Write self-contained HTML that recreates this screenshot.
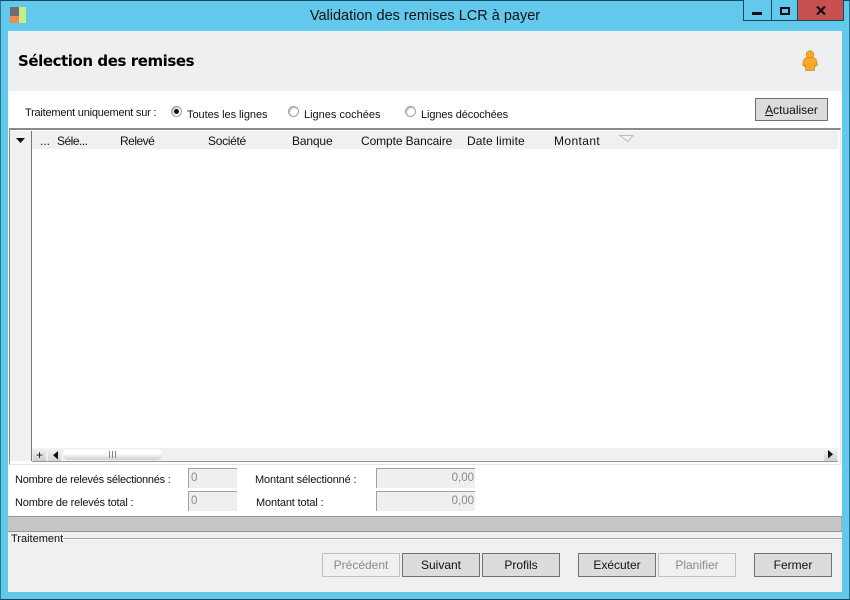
<!DOCTYPE html>
<html lang="fr"><head><meta charset="utf-8"><title>Validation des remises LCR à payer</title>
<style>
html,body{margin:0;padding:0;width:850px;height:600px;overflow:hidden;background:#63c9ec}
body{position:relative;font-family:"Liberation Sans",sans-serif;font-size:11px;color:#111}
div,span{position:absolute;box-sizing:border-box}
.t{white-space:nowrap;line-height:14px}
.h{font-size:12px;top:134px}
.btn{background:#dcdcdc;border:1px solid #707070;text-align:center;font-size:12px;line-height:23px;height:24px;width:78px;top:553px;color:#111}
.btn.d{background:#f0f0f0;border-color:#bfbfbf;color:#8a8a8a}
.inp{background:#efefef;border-top:1px solid #a0a0a0;border-left:1px solid #a0a0a0;height:20px;color:#8a8a8a;font-size:11.5px;line-height:19px}
.ctl{top:0;height:21px;border:1px solid #174a60;border-top:none}
.rad{width:11px;height:11px;border-radius:50%;border:1px solid #a0a0a0;background:#fff;box-shadow:inset 1px 1px 1px #bbb}
</style></head><body>
<div style="left:0;top:0;width:850px;height:600px;border:1px solid #174a60;border-left-color:#2a7391;border-right-color:#2a7391"></div>

<!-- title bar -->
<div style="left:10px;top:7px;width:9px;height:9px;background:#6e6e6e"></div>
<div style="left:10px;top:16px;width:9px;height:7px;background:#f08a50"></div>
<div style="left:19px;top:7px;width:7px;height:16px;background:#c4ee88"></div>
<div class="t" style="left:0;top:7px;width:850px;text-align:center;font-size:14.5px;line-height:18px;color:#111">Validation des remises LCR à payer</div>
<div class="ctl" style="left:743px;width:29px;background:#63c9ec"></div>
<div class="ctl" style="left:771px;width:27px;background:#63c9ec"></div>
<div class="ctl" style="left:797px;width:47px;background:#c75050"></div>
<div style="left:752px;top:12px;width:10px;height:3px;background:#111"></div>
<div style="left:780px;top:7px;width:10px;height:8px;border:2px solid #111"></div>
<svg style="position:absolute;left:816px;top:6px" width="10" height="9" viewBox="0 0 10 9"><path d="M1 0.5L9 8.5M9 0.5L1 8.5" stroke="#111" stroke-width="2.2" fill="none"/></svg>

<!-- client -->
<div style="left:8px;top:31px;width:834px;height:561px;background:#fff"></div>
<div style="left:8px;top:31px;width:834px;height:60px;background:#eeeff0"></div>
<div class="t" style="left:18px;top:52px;font-size:15px;line-height:18px;font-weight:bold;font-family:'DejaVu Sans',sans-serif;letter-spacing:-.43px;color:#000">Sélection des remises</div>
<svg style="position:absolute;left:800px;top:50px" width="20" height="22" viewBox="0 0 20 22"><circle cx="10" cy="4.500" r="3.800" fill="#f9a825" stroke="#c98a2e" stroke-width=".7"/><path d="M6.500 7.500h7l2.500 1.500 1.500 6-2 1.500-1-1.500v5.500h-9v-5.500l-1 1.500-2-1.500 1.500-6z" fill="#f9a825" stroke="#c98a2e" stroke-width=".7"/></svg>

<!-- filter row -->
<div class="t" style="left:25px;top:106px;letter-spacing:-.22px">Traitement uniquement sur :</div>
<div class="rad" style="left:171px;top:106px"></div>
<div style="left:174px;top:109px;width:5px;height:5px;border-radius:50%;background:#111"></div>
<div class="t" style="left:187px;top:108px;letter-spacing:-.05px">Toutes les lignes</div>
<div class="rad" style="left:288px;top:106px"></div>
<div class="t" style="left:304px;top:108px">Lignes cochées</div>
<div class="rad" style="left:405px;top:106px"></div>
<div class="t" style="left:421px;top:108px;letter-spacing:-.1px">Lignes décochées</div>
<div class="btn" style="left:755px;top:98px;width:73px;height:23px;font-size:12px;line-height:23px"><u>A</u>ctualiser</div>

<!-- grid -->
<div style="left:9px;top:128px;width:832px;height:337px;border-top:2px solid #8a8a8a;border-left:1px solid #8a8a8a;border-right:1px solid #e6e6e6;border-bottom:1px solid #e6e6e6;background:#fff"></div>
<div style="left:10px;top:131px;width:21px;height:330px;background:#f0f0f0"></div>
<div style="left:31px;top:131px;width:1px;height:330px;background:#777"></div>
<div style="left:32px;top:131px;width:806px;height:18px;background:#f0f0f0"></div>
<svg style="position:absolute;left:16px;top:138px" width="10" height="6" viewBox="0 0 10 6"><path d="M0 0h9L4.500 5z" fill="#111"/></svg>
<div class="t h" style="left:40px">...</div>
<div class="t h" style="left:57px;letter-spacing:-.5px">Séle...</div>
<div class="t h" style="left:120px;letter-spacing:-.5px">Relevé</div>
<div class="t h" style="left:208px;letter-spacing:-.3px">Société</div>
<div class="t h" style="left:292px;letter-spacing:-.15px">Banque</div>
<div class="t h" style="left:361px;letter-spacing:-.1px">Compte Bancaire</div>
<div class="t h" style="left:467px;letter-spacing:.1px">Date limite</div>
<div class="t h" style="left:554px;letter-spacing:.4px">Montant</div>
<svg style="position:absolute;left:619px;top:135px" width="16" height="8" viewBox="0 0 16 8"><path d="M1 .5h13L9 6.500z" fill="#f4f4f4" stroke="#bcbcbc"/></svg>

<!-- grid footer scrollbar -->
<div style="left:32px;top:448px;width:806px;height:13px;background:#f0f0f0"></div>
<div style="left:32px;top:461px;width:806px;height:1px;background:#999"></div>
<div style="left:33px;top:448px;width:13px;height:13px;background:linear-gradient(#f4f4f4,#cfcfcf)"></div>
<div class="t" style="left:36px;top:448px;font-size:12px;line-height:14px;color:#111">+</div>
<div style="left:48px;top:448px;width:13px;height:13px;background:linear-gradient(#f4f4f4,#d4d4d4)"></div>
<svg style="position:absolute;left:53px;top:451px" width="6" height="9" viewBox="0 0 6 9"><path d="M5 0v8.500L0 4.250z" fill="#111"/></svg>
<div style="left:63px;top:449px;width:99px;height:11px;border-radius:5px;background:linear-gradient(#fafafa,#fff 40%,#cfcfcf)"></div>
<div style="left:109px;top:451px;width:7px;height:7px;border-left:1px solid #888;border-right:1px solid #888"></div>
<div style="left:112px;top:451px;width:1px;height:7px;background:#888"></div>
<div style="left:824px;top:448px;width:13px;height:13px;background:linear-gradient(#f4f4f4,#d0d0d0)"></div>
<svg style="position:absolute;left:828px;top:450px" width="6" height="9" viewBox="0 0 6 9"><path d="M0 0v8.500L5 4.250z" fill="#111"/></svg>

<!-- totals -->
<div class="t" style="left:15px;top:473px;letter-spacing:-.24px">Nombre de relevés sélectionnés :</div>
<div class="t" style="left:15px;top:496px;letter-spacing:-.18px">Nombre de relevés total :</div>
<div class="inp" style="left:188px;top:468px;width:49px;padding-left:2px">0</div>
<div class="inp" style="left:188px;top:491px;width:49px;padding-left:2px">0</div>
<div class="t" style="left:255px;top:473px;letter-spacing:-.15px">Montant sélectionné :</div>
<div class="t" style="left:256px;top:496px;letter-spacing:-.15px">Montant total :</div>
<div class="inp" style="left:376px;top:468px;width:99px;text-align:right;padding-right:1px">0,00</div>
<div class="inp" style="left:376px;top:491px;width:99px;text-align:right;padding-right:1px">0,00</div>

<!-- progress + bottom -->
<div style="left:8px;top:516px;width:834px;height:16px;background:#c6c6c6;border-top:1px solid #999;border-bottom:1px solid #999;border-right:1px solid #aaa"></div>
<div style="left:8px;top:532px;width:834px;height:60px;background:#f0f0f0"></div>
<div style="left:63px;top:538px;width:779px;height:1px;background:#a8a8a8"></div>
<div style="left:63px;top:539px;width:779px;height:1px;background:#fff"></div>
<div class="t" style="left:11px;top:532px">Traitement</div>
<div class="btn d" style="left:322px">Précédent</div>
<div class="btn" style="left:402px">Suivant</div>
<div class="btn" style="left:482px">Profils</div>
<div class="btn" style="left:578px">Exécuter</div>
<div class="btn d" style="left:658px">Planifier</div>
<div class="btn" style="left:754px">Fermer</div>
</body></html>
